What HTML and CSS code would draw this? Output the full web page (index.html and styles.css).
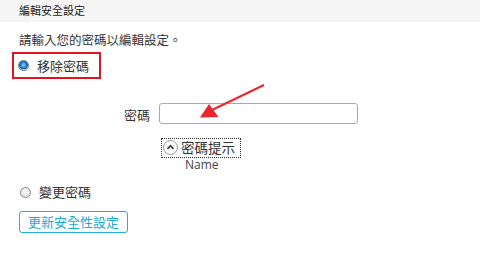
FILE: index.html
```html
<!DOCTYPE html>
<html>
<head>
<meta charset="utf-8">
<link rel="stylesheet" href="styles.css">
</head>
<body>
<div class="header">編輯安全設定</div>
<div class="content">
  <div class="intro">請輸入您的密碼以編輯設定。</div>
  <div class="option selected">
    <span class="radio on"></span><span class="opt-label">移除密碼</span>
  </div>
  <div class="pw-row">
    <span class="pw-label">密碼</span>
    <span class="pw-input"></span>
  </div>
  <div class="hint-row">
    <span class="hint-btn"><span class="hint-icon"><svg width="11" height="11" viewBox="0 0 11 11"><path d="M2.5 6.8 L5.5 3.8 L8.5 6.8" fill="none" stroke="#444" stroke-width="1.8"/></svg></span><span class="hint-text">密碼提示</span></span>
  </div>
  <div class="hint-name">Name</div>
  <div class="option second">
    <span class="radio"></span><span class="opt-label">變更密碼</span>
  </div>
  <div class="btn">更新安全性設定</div>
</div>
<svg class="arrow" width="480" height="276" viewBox="0 0 480 276">
  <line x1="264" y1="85" x2="212" y2="110" stroke="#e8262c" stroke-width="2"/>
  <polygon points="200,117.5 218.5,117 209,104" fill="#e8262c"/>
</svg>
</body>
</html>
```
FILE: styles.css
```css
html, body { margin: 0; padding: 0; background: #fff; }
body {
  width: 480px; height: 276px; overflow: hidden; position: relative;
  font-family: "Open Sans", "Noto Sans CJK TC", sans-serif;
  color: #333;
}
.header {
  height: 22px; background: #f5f5f5; padding-left: 19px;
  font-size: 11px; line-height: 21px; color: #222;
}
.content { padding-left: 19px; }
.intro { margin-top: 10px; font-size: 12.5px; line-height: 18px; height: 18px; color: #333; }
.option { display: flex; align-items: center; }
.option.selected {
  margin-left: -7px; margin-top: 2px; width: 81px; height: 23px;
  border: 2px solid #e3141f; padding-left: 4px;
}
.radio {
  width: 9px; height: 9px; border-radius: 50%;
  border: 1px solid #8a8a8a;
  background: radial-gradient(circle at 50% 40%, #fff 0, #e6e6e6 60%, #c8c8c8 100%);
  flex: none;
}
.radio.on {
  background: radial-gradient(circle at 50% 45%, #8fd0ff 0, #1f7fd0 45%, #0d5aa5 60%, #dfe8f0 70%, #f4f4f4 100%);
  border-color: #6b7b8a;
}
.opt-label { margin-left: 8px; font-size: 13px; line-height: 20px; color: #333; }
.pw-row { display: flex; align-items: center; margin-top: 24px; height: 21px; }
.pw-label { width: 131px; text-align: right; font-size: 13px; padding-right: 9px; padding-top: 1px; }
.pw-input {
  width: 197px; height: 19px; border: 1px solid #aaa; border-radius: 3px; background: #fff;
}
.hint-row { margin-top: 12px; padding-left: 142px; height: 21px; }
.hint-btn {
  display: inline-flex; align-items: center; height: 18px; width: 78px;
  border: 1px dotted #333; box-sizing: content-box;
}
.hint-icon {
  width: 13px; height: 13px; border-radius: 50%; border: 1px solid #999;
  display: inline-flex; align-items: center; justify-content: center; margin-left: 1px;
  background: #fff;
}
.hint-text { margin-left: 3px; font-size: 13.5px; line-height: 18px; color: #333; }
.hint-name { padding-left: 166px; font-size: 12px; line-height: 15px; color: #444; margin-top: 0; }
.option.second { margin-top: 11px; height: 18px; }
.option.second .radio { margin-left: 1px; }
.btn {
  margin-top: 10px; width: 107px; height: 20px; border: 1px solid #22b1d8; border-radius: 3px;
  color: #22a9d3; font-size: 13px; line-height: 20px; text-align: center;
}
.arrow { position: absolute; left: 0; top: 0; pointer-events: none; }
```
